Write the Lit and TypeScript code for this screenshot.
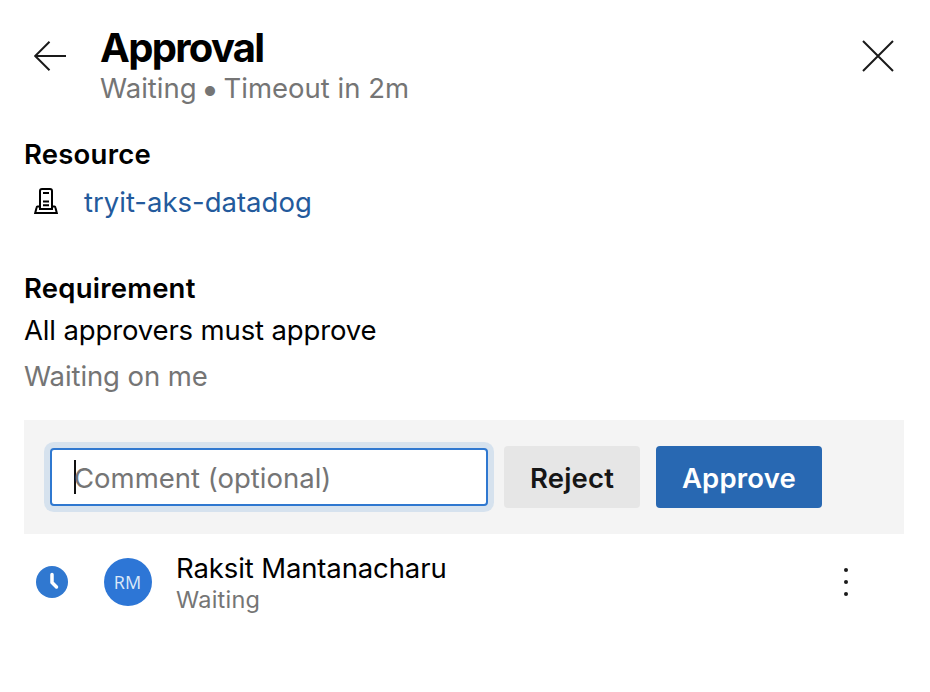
import { LitElement, html, css } from "lit";
import { customElement } from "lit/decorators.js";

@customElement("app-root")
export class AppRoot extends LitElement {
  static styles = css`
    :host {
      display: block;
      box-sizing: border-box;
      width: 930px;
      height: 692px;
      padding: 24px 26px 0 24px;
      background: #fff;
      color: #000;
      font-family: Inter, "Liberation Sans", sans-serif;
      font-size: 27.5px;
      overflow: hidden;
      white-space: nowrap;
    }
    svg { display: block; flex: none; }
    header { display: flex; height: 80px; }
    .back { margin: 16px 33px 0 9px; }
    .heading { flex: 1; }
    .close { margin: 16px 10px 0 0; }
    h1 { margin: 0; font-size: 40px; line-height: 48px; font-weight: 700; letter-spacing: -1.7px; }
    .muted { color: #757575; }
    .sub { display: flex; align-items: center; height: 32px; line-height: 32px; }
    .bullet { width: 27px; padding-top: 2px; text-align: center; font-size: 32px; line-height: 30px; }
    section { display: flex; flex-direction: column; }
    h2 { margin: 0; font-size: 27.5px; line-height: 40px; font-weight: 600; letter-spacing: 0.22px; }
    .resource { padding-top: 30px; gap: 8px; }
    .link-row { display: flex; height: 40px; align-items: center; }
    .server { margin: 0 25px 0 9px; }
    .link { color: #235a9c; }
    .requirement { padding-top: 46px; line-height: 40px; }
    .rule { margin-top: 2px; letter-spacing: -0.14px; }
    .pending { margin-top: 6px; letter-spacing: -0.1px; }
    .panel {
      display: flex;
      align-items: center;
      box-sizing: border-box;
      height: 114px;
      margin-top: 24px;
      padding-left: 26px;
      background: #f4f4f4;
    }
    .field {
      display: flex;
      align-items: center;
      box-sizing: border-box;
      width: 438px;
      height: 58px;
      padding-left: 22px;
      border: 2px solid #2f78d0;
      border-radius: 4px;
      background: #fff;
      box-shadow: 0 0 0 6px #d6e2ee;
    }
    .placeholder { padding-top: 2px; }
    .caret { width: 2px; height: 34px; margin-right: -2px; background: #111; }
    .button {
      display: flex;
      align-items: center;
      justify-content: center;
      box-sizing: border-box;
      height: 62px;
      padding-top: 2px;
      border-radius: 4px;
      font-weight: 600;
      letter-spacing: 0.2px;
    }
    .reject { width: 136px; margin: 0 16px; background: #e6e6e6; color: #161616; }
    .approve { width: 166px; background: #2868b2; color: #fff; }
    .approver { display: flex; align-items: center; height: 68px; padding: 14px 0 0 12px; }
    .avatar {
      display: flex;
      align-items: center;
      justify-content: center;
      box-sizing: border-box;
      width: 48px;
      height: 48px;
      padding: 0 1px 0 0;
      margin: 0 24px 0 36px;
      border-radius: 50%;
      background: #2d76d6;
      color: #dbe8f8;
      font: 400 18px "Open Sans", "Noto Sans", sans-serif;
    }
    .who { flex: 1; padding-top: 4px; }
    .name { line-height: 32px; letter-spacing: -0.12px; }
    .state { font-size: 23.5px; line-height: 32px; letter-spacing: 0.25px; }
    .more { margin-right: 56px; }
  `;

  render() {
    return html`
      <header>
        <svg class="back" width="34" height="32" viewBox="0 0 34 32" fill="none" stroke="#1a1a1a" stroke-width="2">
          <path d="M33 16H2M16.5 1.8 2.2 16l14.3 14.2" />
        </svg>
        <div class="heading">
          <h1>Approval</h1>
          <div class="sub muted"><span>Waiting</span><span class="bullet">•</span><span>Timeout in 2m</span></div>
        </div>
        <svg class="close" width="32" height="32" viewBox="0 0 32 32" fill="none" stroke="#1a1a1a" stroke-width="2">
          <path d="M1 1 31 31M31 1 1 31" />
        </svg>
      </header>
      <section class="resource">
        <h2>Resource</h2>
        <div class="link-row">
          <svg class="server" width="26" height="28" viewBox="0 0 26 28" fill="none" stroke="#000" stroke-width="2">
            <path d="M7 21V3Q7 1 9 1h8Q19 1 19 3V21zM7 18.500H4.500Q3.800 18.500 3.600 19.500L2.200 25H23.800L22.400 19.500Q22.200 18.500 21.500 18.500H19M10 5h6M10 13.500h6M10 17.200h6" />
          </svg>
          <span class="link">tryit-aks-datadog</span>
        </div>
      </section>
      <section class="requirement">
        <h2>Requirement</h2>
        <div class="rule">All approvers must approve</div>
        <div class="pending muted">Waiting on me</div>
      </section>
      <div class="panel">
        <div class="field"><span class="caret"></span><span class="placeholder muted">Comment (optional)</span></div>
        <div class="button reject">Reject</div>
        <div class="button approve">Approve</div>
      </div>
      <div class="approver">
        <svg width="32" height="32" viewBox="0 0 32 32" fill="none">
          <circle cx="16" cy="16" r="16" fill="#3078d0" />
          <path d="M16 8.500V16.500l4.500 4.500" stroke="#fff" stroke-width="3.500" stroke-linecap="round" stroke-linejoin="round" />
        </svg>
        <div class="avatar">RM</div>
        <div class="who">
          <div class="name">Raksit Mantanacharu</div>
          <div class="state muted">Waiting</div>
        </div>
        <svg class="more" width="4" height="28" viewBox="0 0 4 28" fill="#1a1a1a">
          <circle cx="2" cy="2" r="2" /><circle cx="2" cy="14" r="2" /><circle cx="2" cy="26" r="2" />
        </svg>
      </div>
    `;
  }
}
